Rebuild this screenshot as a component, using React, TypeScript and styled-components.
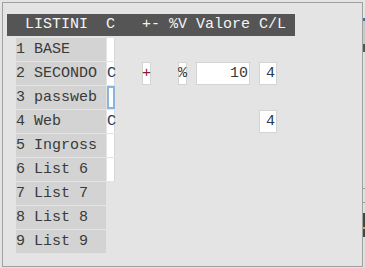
import React from 'react'
import styled, { createGlobalStyle } from 'styled-components'

const GlobalStyle = createGlobalStyle`
  html, body {
    margin: 0;
    padding: 0;
    background: #e4e4e4;
    overflow: hidden;
  }
`

interface Listino {
  n: number
  name: string
  c?: string
  cell?: boolean
  focused?: boolean
  sign?: string
  pct?: string
  valore?: string
  cl?: string
}

const rows: Listino[] = [
  { n: 1, name: 'BASE', cell: true },
  { n: 2, name: 'SECONDO', cell: true, c: 'C', sign: '+', pct: '%', valore: '10', cl: '4' },
  { n: 3, name: 'passweb', cell: true, focused: true },
  { n: 4, name: 'Web', cell: true, c: 'C', cl: '4' },
  { n: 5, name: 'Ingross', cell: true },
  { n: 6, name: 'List 6', cell: true },
  { n: 7, name: 'List 7' },
  { n: 8, name: 'List 8' },
  { n: 9, name: 'List 9' },
]

// thin strip of the neighbouring window at the right edge
const strip: [number, string][] = [
  [18, '#e6e6e6'],
  [3, '#3b6ea8'],
  [23, '#c9c9c9'],
  [8, '#555555'],
  [136, '#e0e0e0'],
  [1, '#999999'],
  [13, '#e0e0e0'],
  [1, '#999999'],
  [10, '#e0e0e0'],
  [14, '#454545'],
  [2, '#e8a050'],
  [8, '#454545'],
  [31, '#e0e0e0'],
]

const App: React.FC = () => {
  return (
    <>
      <GlobalStyle />
      <Screen>
        <Panel>
          <Header>{'LISTINI  C   +- %V Valore C/L'}</Header>
          <Rows>
            {rows.map((r) => (
              <Row key={r.n}>
                <Label>{`${r.n} ${r.name}`}</Label>
                {r.cell && <CCell $focused={r.focused}>{r.c}</CCell>}
                {r.sign && <Box $col={5} $color="#8b1a2b">{r.sign}</Box>}
                {r.pct && <Box $col={7}>{r.pct}</Box>}
                {r.valore && (
                  <Box $col={9} $align="right">
                    {r.valore}
                  </Box>
                )}
                {r.cl && (
                  <Box $col={11} $align="right" $color="#2b3a58">
                    {r.cl}
                  </Box>
                )}
              </Row>
            ))}
          </Rows>
        </Panel>
        <Strip>
          {strip.map(([h, c], i) => (
            <StripPart key={i} $h={h} $c={c} />
          ))}
        </Strip>
      </Screen>
    </>
  )
}

const Screen = styled.div`
  display: flex;
  align-items: flex-start;
  width: 365px;
  height: 268px;
  font-family: 'Liberation Mono', 'DejaVu Sans Mono', monospace;
  font-size: 15px;
`

const Panel = styled.div`
  box-sizing: border-box;
  width: 361px;
  height: 265px;
  margin: 2px 0 0 2px;
  padding: 11px 0 0 4px;
  border: 1px solid #a0a0a0;
  background: #e4e4e4;
`

const Header = styled.div`
  box-sizing: border-box;
  width: 288px;
  height: 22px;
  line-height: 22px;
  padding-left: 18px;
  background: #555555;
  color: #f4f4f4;
  white-space: pre;
`

const Rows = styled.div`
  display: flex;
  flex-direction: column;
  gap: 1px;
  margin: 2px 0 0 9px;
`

const Row = styled.div`
  display: grid;
  grid-template-columns: 90px 1px 8px 27px 9px 27px 9px 9px 54px 9px 18px;
  height: 23px;
`

const Label = styled.div`
  grid-column: 1;
  background: #d3d3d3;
  color: #3a3a3a;
  line-height: 23px;
  white-space: pre;
`

const CCell = styled.div<{ $focused?: boolean }>`
  grid-column: 3;
  box-sizing: border-box;
  background: #ffffff;
  color: #2b3a58;
  line-height: 23px;
  overflow: visible;
  white-space: pre;
  border: ${(p) => (p.$focused ? '2px solid #8cb4e2' : '0')};
  border-right: ${(p) => (p.$focused ? '2px solid #8cb4e2' : '1px solid #d8d8d8')};
`

const Box = styled.div<{ $col: number; $align?: string; $color?: string }>`
  grid-column: ${(p) => p.$col};
  display: flex;
  align-items: center;
  justify-content: ${(p) => (p.$align === 'right' ? 'flex-end' : 'center')};
  box-sizing: border-box;
  background: #ffffff;
  border: 1px solid #d4d4d4;
  color: ${(p) => p.$color || '#3a3a3a'};
  line-height: 21px;
  padding: ${(p) => (p.$align === 'right' ? '0 1px 0 0' : '0')};
  white-space: pre;
`

const Strip = styled.div`
  display: flex;
  flex-direction: column;
  width: 2px;
`

const StripPart = styled.div<{ $h: number; $c: string }>`
  height: ${(p) => p.$h}px;
  background: ${(p) => p.$c};
`

export default App
